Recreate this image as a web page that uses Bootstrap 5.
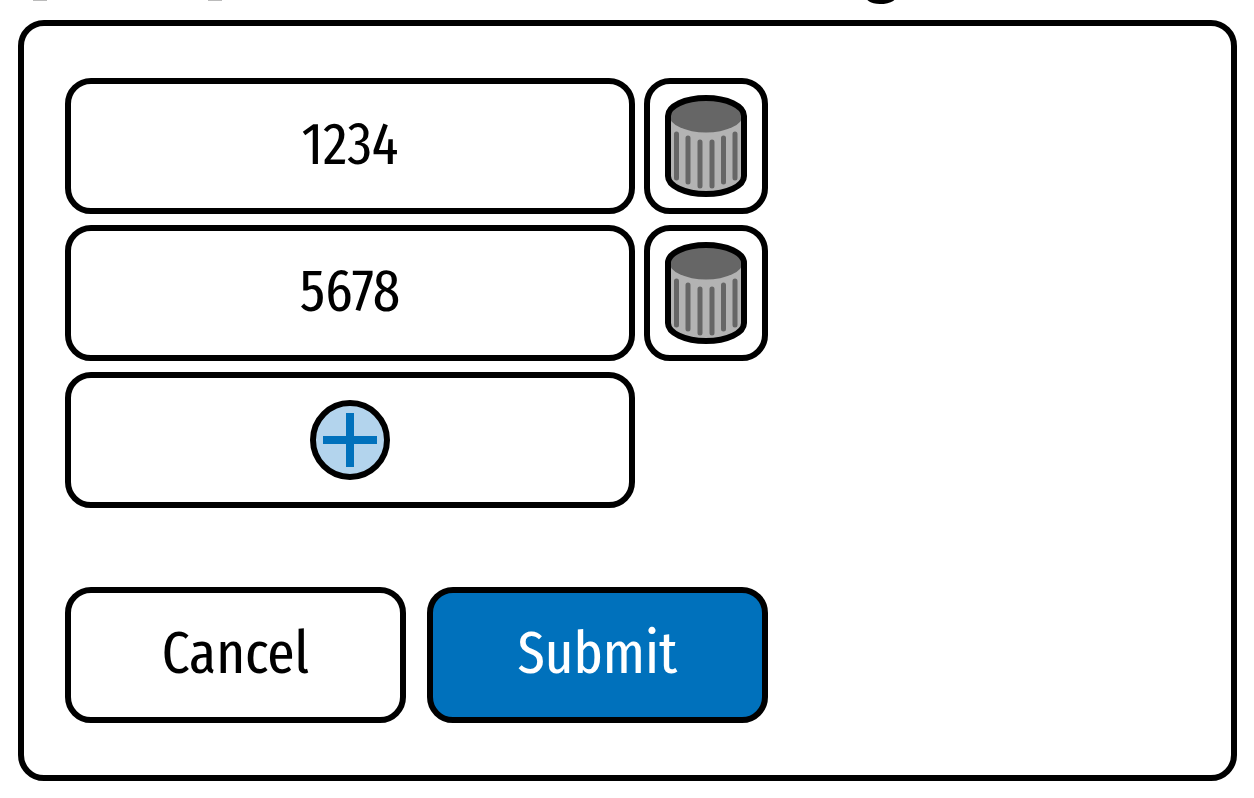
<!DOCTYPE html>
<html lang="en">
<head>
<meta charset="utf-8">
<meta name="viewport" content="width=device-width, initial-scale=1">
<title>Edit codes</title>
<link href="https://cdn.jsdelivr.net/npm/bootstrap@5.3.0/dist/css/bootstrap.min.css" rel="stylesheet">
<style>
  body { font-family: "Fira Sans Extra Condensed", "Fira Sans Condensed", "Liberation Sans Narrow", "Liberation Sans", sans-serif; color: #000; background: #fff; }
  .caption-strip { height: 5px; padding-left: 33px; }
  .tick { width: 14px; height: 1px; background: #bbb; }
  .tick-gap { width: 161px; }
  .caption-gap { width: 643px; }
  .caption-tail { font: 600 62px/80px "Open Sans", sans-serif; }
  .panel { margin: 15px 17px 17px 18px; padding: 52px 41px; border: 6px solid #000; border-radius: 26px; }
  .code-form { max-width: 703px; }
  .rows { gap: 11px; margin-bottom: 79px; }
  .row-line { gap: 9px; }
  .actions { gap: 21px; }
  .box, .box:hover, .box:focus { height: 136px; min-width: 0; padding: 0; border: 6px solid #000; border-radius: 26px; background: #fff; color: #000; font-size: 60px; line-height: 64px; }
  .icon-box, .icon-space { width: 124px; }
  .label-box { padding-bottom: 4px !important; }
  .box.submit, .box.submit:hover { background: #0071bc; color: #fff; }
</style>
</head>
<body>
<svg class="d-none" aria-hidden="true">
  <symbol id="bin" viewBox="0 0 82 102">
    <path d="M3 21C3 11 20 3 41 3s38 8 38 18v60c0 10-17 18-38 18S3 91 3 81z" fill="#b3b3b3"/>
    <ellipse cx="41" cy="20" rx="37" ry="17.500" fill="#666"/>
    <path d="M11.500 39v44M23 43v44M35 47v44M47 47v44M58.500 43v44M70 39v44" stroke="#666" stroke-width="5" stroke-linecap="round"/>
    <path d="M3 21C3 11 20 3 41 3s38 8 38 18v60c0 10-17 18-38 18S3 91 3 81z" fill="none" stroke="#000" stroke-width="6"/>
  </symbol>
</svg>
<header class="caption-strip d-flex align-items-end overflow-hidden">
  <div class="tick align-self-start flex-shrink-0"></div>
  <div class="tick-gap flex-shrink-0"></div>
  <div class="tick align-self-start flex-shrink-0"></div>
  <div class="caption-gap flex-shrink-0"></div>
  <span class="caption-tail">g</span>
</header>
<main class="panel">
  <form class="code-form">
    <div class="rows d-flex flex-column">
      <div class="row-line d-flex">
        <input class="box label-box flex-fill text-center" type="text" value="1234" aria-label="First code">
        <button class="box icon-box btn d-flex align-items-center justify-content-center flex-shrink-0" type="button" aria-label="Delete 1234"><svg width="82" height="102"><use href="#bin"/></svg></button>
      </div>
      <div class="row-line d-flex">
        <input class="box label-box flex-fill text-center" type="text" value="5678" aria-label="Second code">
        <button class="box icon-box btn d-flex align-items-center justify-content-center flex-shrink-0" type="button" aria-label="Delete 5678"><svg width="82" height="102"><use href="#bin"/></svg></button>
      </div>
      <div class="row-line d-flex">
        <button class="box btn flex-fill d-flex align-items-center justify-content-center" type="button" aria-label="Add code">
          <svg width="80" height="80" viewBox="0 0 80 80"><circle cx="40" cy="40" r="37" fill="#b3d4ed" stroke="#000" stroke-width="6"/><path d="M40 13v54M13 40h54" stroke="#0071bc" stroke-width="8"/></svg>
        </button>
        <div class="icon-space flex-shrink-0"></div>
      </div>
    </div>
    <div class="actions d-flex">
      <button class="box label-box btn w-50" type="button">Cancel</button>
      <button class="box label-box submit btn w-50" type="submit">Submit</button>
    </div>
  </form>
</main>
<script src="https://cdn.jsdelivr.net/npm/bootstrap@5.3.0/dist/js/bootstrap.bundle.min.js"></script>
</body>
</html>
